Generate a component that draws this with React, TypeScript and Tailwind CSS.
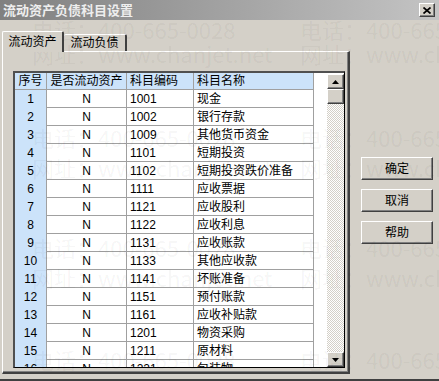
const rows: [string, string, string, string][] = [
  ["1", "N", "1001", "现金"],
  ["2", "N", "1002", "银行存款"],
  ["3", "N", "1009", "其他货币资金"],
  ["4", "N", "1101", "短期投资"],
  ["5", "N", "1102", "短期投资跌价准备"],
  ["6", "N", "1111", "应收票据"],
  ["7", "N", "1121", "应收股利"],
  ["8", "N", "1122", "应收利息"],
  ["9", "N", "1131", "应收账款"],
  ["10", "N", "1133", "其他应收款"],
  ["11", "N", "1141", "坏账准备"],
  ["12", "N", "1151", "预付账款"],
  ["13", "N", "1161", "应收补贴款"],
  ["14", "N", "1201", "物资采购"],
  ["15", "N", "1211", "原材料"],
  ["16", "N", "1221", "包装物"],
];

const raised =
  "border border-t-white border-l-white border-r-[#404040] border-b-[#404040] bg-[#d4d0c8] shadow-[inset_-1px_-1px_0_#808080]";

const marks: { x: number; y: number; t: string }[] = [
  { x: 32, y: 18, t: "电话：400-665-0028" },
  { x: 300, y: 18, t: "电话：400-665-0028" },
  { x: 32, y: 42, t: "网址：www.chanjet.net" },
  { x: 300, y: 42, t: "网址：www.chanjet.net" },
  { x: 32, y: 126, t: "电话：400-665-0028" },
  { x: 300, y: 126, t: "电话：400-665-0028" },
  { x: 32, y: 156, t: "网址：www.chanjet.net" },
  { x: 300, y: 156, t: "网址：www.chanjet.net" },
  { x: 32, y: 236, t: "电话：400-665-0028" },
  { x: 300, y: 236, t: "电话：400-665-0028" },
  { x: 32, y: 266, t: "网址：www.chanjet.net" },
  { x: 300, y: 266, t: "网址：www.chanjet.net" },
  { x: 32, y: 348, t: "电话：400-665-0028" },
  { x: 300, y: 348, t: "电话：400-665-0028" },
];

function Arrow({ up }: { up?: boolean }) {
  return (
    <svg width="7" height="4" viewBox="0 0 7 4">
      <polygon points={up ? "3.5,0 7,4 0,4" : "0,0 7,0 3.5,4"} fill="#000" />
    </svg>
  );
}

export default function App() {
  return (
    <div className="relative flex h-[381px] w-[439px] flex-col overflow-hidden bg-[#d4d0c8] font-['Liberation_Sans','Noto_Sans_CJK_SC',sans-serif] text-[12px] leading-none text-black">
      <div className="flex h-[20px] shrink-0 items-center justify-between bg-gradient-to-r from-[#808080] to-[#c4c4c4] pl-[3px] pr-[4px]">
        <span className="text-[13px] font-bold text-[#eeeeee]">流动资产负债科目设置</span>
        <div className={`flex h-[14px] w-[16px] items-center justify-center ${raised}`}>
          <svg width="8" height="7" viewBox="0 0 8 7">
            <path d="M0.5 0.5 L7.5 6.5 M7.5 0.5 L0.5 6.5" stroke="#000" strokeWidth="1.7" />
          </svg>
        </div>
      </div>

      <div className="flex flex-1 border-b-2 border-b-[#404040]">
        <div className="ml-[2px] mt-[11px] flex w-[348px] flex-col">
          <div className="flex h-[20px] items-end">
            <div className="relative z-10 -mb-px flex h-[21px] w-[62px] items-center justify-center rounded-t-[2px] border-t border-l border-r-2 border-t-white border-l-white border-r-[#404040] bg-[#d4d0c8]">
              流动资产
            </div>
            <div className="flex h-[17px] w-[63px] items-center justify-center rounded-t-[2px] border-t border-r-2 border-t-white border-r-[#404040] bg-[#d4d0c8]">
              流动负债
            </div>
          </div>
          <div className="h-[323px] border-t border-l border-r-2 border-b-2 border-t-white border-l-white border-r-[#404040] border-b-[#404040] pl-[10px] pt-[19px] shadow-[inset_-1px_-1px_0_#808080]">
            <div className="flex h-[297px] w-[332px] overflow-hidden border-t-2 border-l-2 border-r border-b border-t-[#505050] border-l-[#505050] border-r-black border-b-black bg-white">
              <div className="flex w-[299px] flex-col">
                <div className="flex h-[17px] shrink-0 border-b border-[#a0a0a0] bg-[#cce3fa]">
                  <div className="flex w-[32px] items-center justify-center border-r border-[#a0a0a0]">序号</div>
                  <div className="flex w-[80px] items-center justify-center border-r border-[#a0a0a0]">是否流动资产</div>
                  <div className="flex w-[67px] items-center border-r border-[#a0a0a0] pl-[3px]">科目编码</div>
                  <div className="flex w-[120px] items-center border-r border-[#a0a0a0] pl-[3px]">科目名称</div>
                </div>
                {rows.map(([n, f, code, name]) => (
                  <div key={n} className="flex h-[18px] shrink-0">
                    <div className="flex w-[32px] items-center justify-center border-r border-[#a0a0a0] bg-[#cce3fa]">{n}</div>
                    <div className="flex w-[80px] items-center justify-center border-r border-b border-[#a0a0a0]">{f}</div>
                    <div className="flex w-[67px] items-center border-r border-b border-[#a0a0a0] pl-[3px]">{code}</div>
                    <div className="flex w-[120px] items-center border-r border-b border-[#a0a0a0] pl-[3px]">{name}</div>
                  </div>
                ))}
              </div>
              <div className="flex-1" />
              <div className="flex w-[17px] flex-col pt-px">
                <div className={`flex h-[15px] shrink-0 items-center justify-center ${raised}`}>
                  <Arrow up />
                </div>
                <div className={`h-[15px] shrink-0 ${raised}`} />
                <div className="flex-1 bg-[image:repeating-conic-gradient(#d4d0c8_0_25%,#ffffff_0_50%)] bg-[length:2px_2px]" />
                <div className={`flex h-[15px] shrink-0 items-center justify-center ${raised}`}>
                  <Arrow />
                </div>
              </div>
            </div>
          </div>
        </div>
        <div className="ml-[11px] mt-[137px] flex flex-col gap-[9px]">
          {["确定", "取消", "帮助"].map((t) => (
            <div key={t} className={`flex h-[23px] w-[72px] items-center justify-center ${raised}`}>
              {t}
            </div>
          ))}
        </div>
      </div>

      <div className="pointer-events-none absolute inset-0">
        {marks.map((m, i) => (
          <span
            key={i}
            className="absolute whitespace-nowrap font-['Noto_Sans_CJK_SC',sans-serif] text-[22px] leading-none text-black/[0.05]"
            style={{ left: m.x, top: m.y }}
          >
            {m.t}
          </span>
        ))}
      </div>
    </div>
  );
}
